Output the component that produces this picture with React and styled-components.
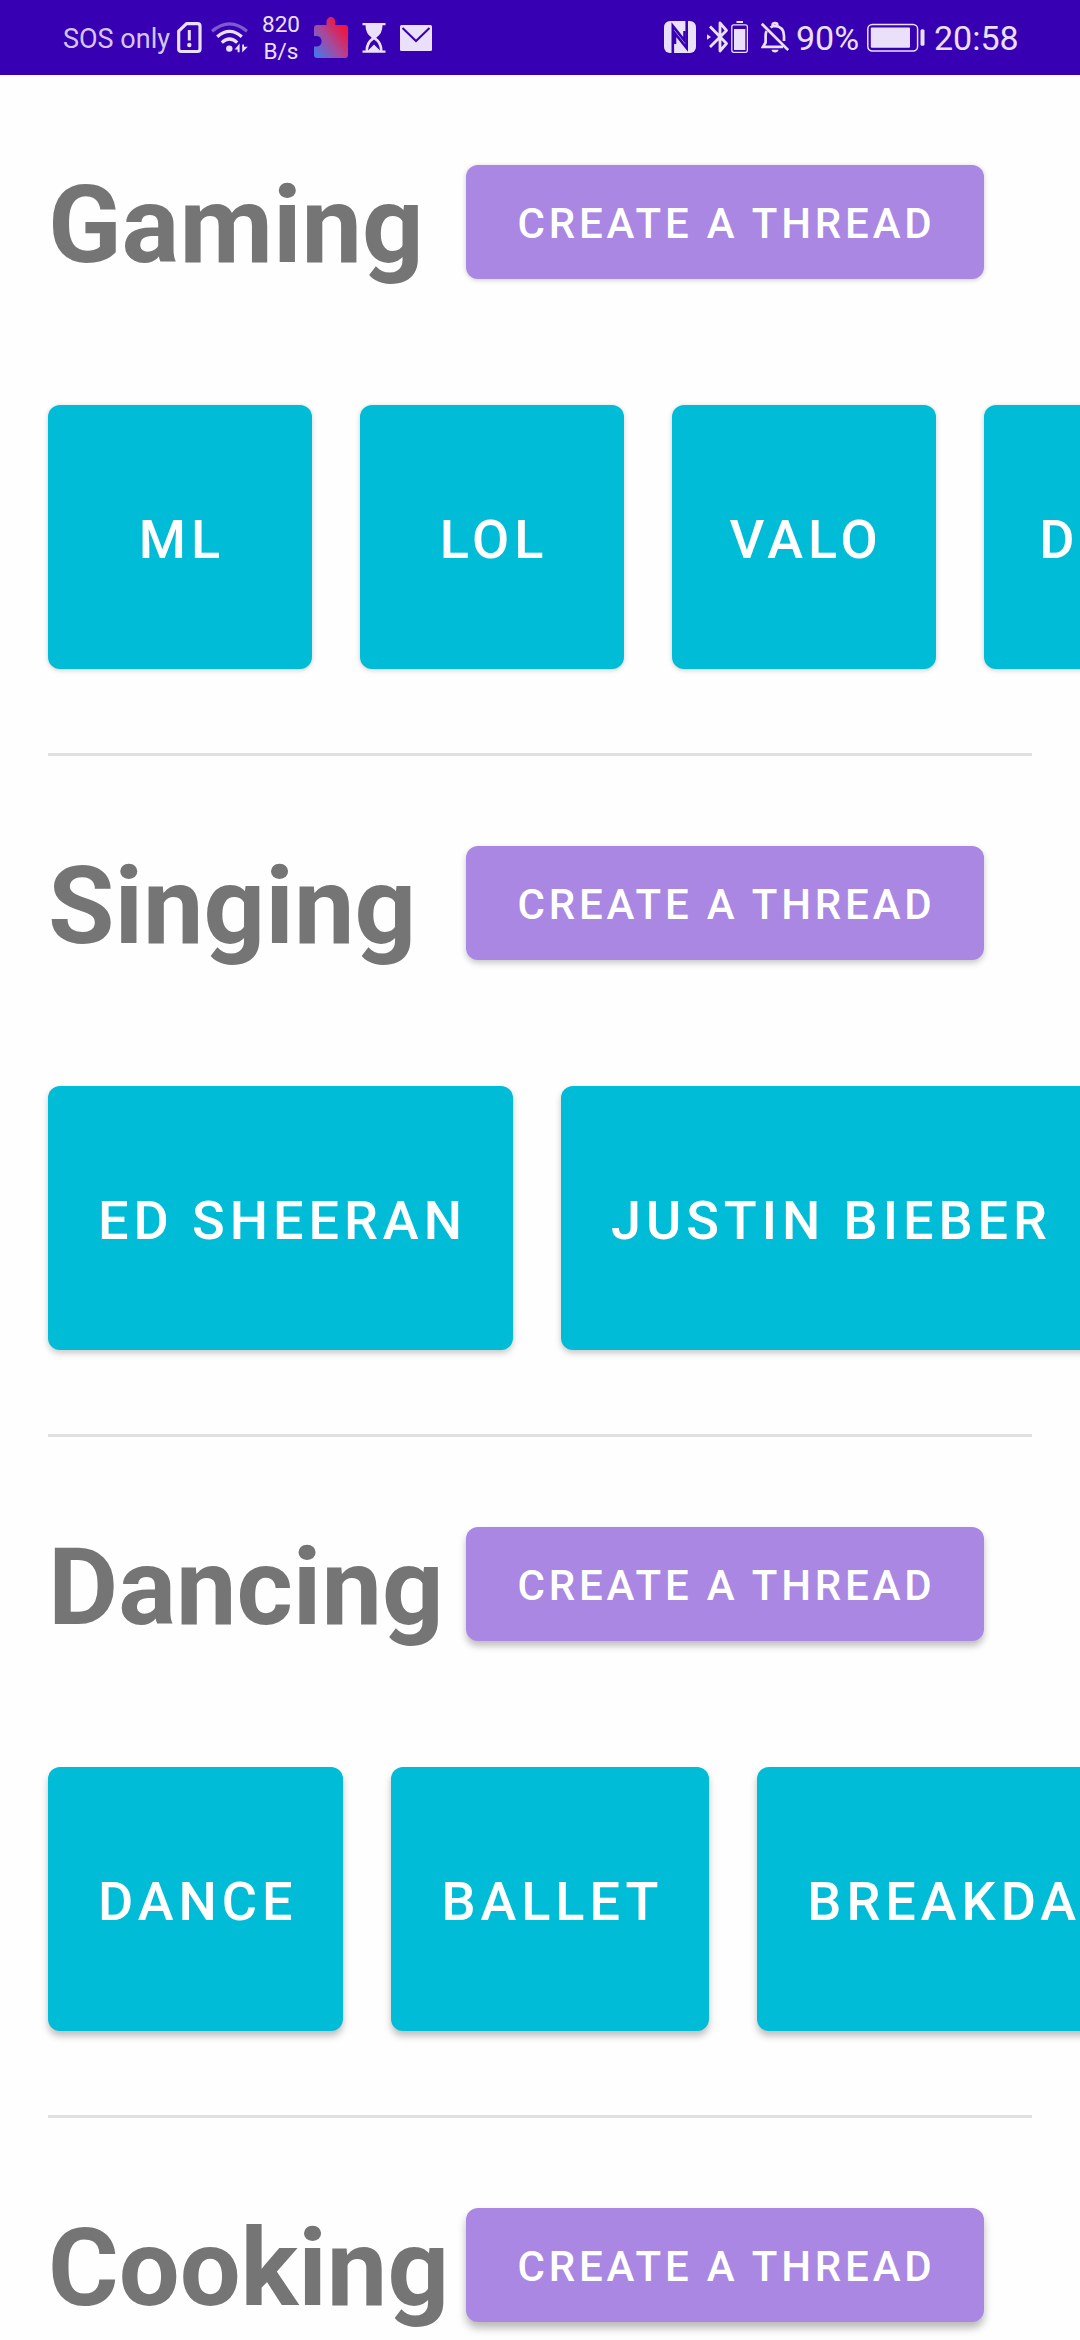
import { createGlobalStyle } from "styled-components";
import styled from "styled-components";

const GlobalStyle = createGlobalStyle`
  body {
    margin: 0;
    background: #fefefe;
    font-family: Roboto, "Liberation Sans", sans-serif;
  }
`;

const Screen = styled.div`
  width: 1080px;
  height: 2340px;
  overflow: hidden;
`;

const StatusBar = styled.header`
  display: flex;
  justify-content: space-between;
  height: 75px;
  padding: 0 61px 0 63px;
  box-sizing: border-box;
  background: #3700b3;
  color: #ebe0fa;
`;

const StatusGroup = styled.div`
  display: flex;
`;

const StatusText = styled.span`
  width: ${(props) => props.$width}px;
  padding-top: ${(props) => props.$top}px;
  margin-left: ${(props) => props.$gap || 0}px;
  font-size: ${(props) => props.$size}px;
  line-height: ${(props) => props.$line || 40}px;
  text-align: ${(props) => props.$align || "left"};
  color: ${(props) => props.$color || "inherit"};
  white-space: nowrap;
`;

const StatusIcon = styled.svg`
  flex: none;
  display: block;
  height: 75px;
  margin-left: ${(props) => props.$gap}px;
`;

const Section = styled.section`
  height: 681px;
  padding: 90px 0 0 48px;
  box-sizing: border-box;
`;

const SectionHeader = styled.div`
  display: flex;
  height: 114px;
`;

const Title = styled.h2`
  width: 418px;
  margin: 0;
  padding-top: 1px;
  box-sizing: border-box;
  font-size: 108px;
  font-weight: 700;
  line-height: 118px;
  color: #757575;
`;

const shadows = [
  "0 1px 5px rgba(0, 0, 0, 0.2)",
  "0 3px 6px rgba(0, 0, 0, 0.22)",
  "0 5px 7px rgba(0, 0, 0, 0.25)",
  "0 6px 8px rgba(0, 0, 0, 0.28)",
];

const Button = styled.button`
  flex: none;
  display: flex;
  align-items: center;
  justify-content: center;
  box-sizing: border-box;
  border: none;
  border-radius: 12px;
  color: #fff;
  font-family: inherit;
  font-weight: 500;
  white-space: nowrap;
  box-shadow: ${(props) => shadows[props.$depth]};
`;

const CreateButton = styled(Button)`
  width: 518px;
  height: 114px;
  padding: 2px 0 0 3px;
  background: #a987e3;
  font-size: 42px;
  letter-spacing: 3.83px;
`;

const TopicRow = styled.div`
  display: flex;
  gap: 48px;
  margin-top: 126px;
`;

const TopicButton = styled(Button)`
  min-width: 264px;
  height: 264px;
  padding: 5px 46px 0 50px;
  background: #00bcd7;
  font-size: 54px;
  letter-spacing: 4.96px;
`;

const Divider = styled.hr`
  width: 984px;
  height: 3px;
  margin: 84px 0 0;
  border: none;
  background: #e0e0e0;
`;

const sections = [
  { title: "Gaming", topics: ["ML", "LOL", "VALO", "DOTA"] },
  { title: "Singing", topics: ["ED SHEERAN", "JUSTIN BIEBER"] },
  { title: "Dancing", topics: ["DANCE", "BALLET", "BREAKDANCE"] },
  { title: "Cooking", topics: [] },
];

function SimAlertIcon() {
  return (
    <StatusIcon $gap={6} width="25" viewBox="0 0 25 75" fill="none">
      <path
        d="M9.5 23.7H20.5Q23 23.7 23 26.2V49Q23 51.5 20.5 51.5H4.2Q1.7 51.5 1.7 49V31.2Z"
        stroke="currentColor"
        strokeWidth="3.2"
        strokeLinejoin="round"
      />
      <path d="M12.3 30V40.5" stroke="currentColor" strokeWidth="3" />
      <circle cx="12.3" cy="45" r="2.2" fill="currentColor" />
    </StatusIcon>
  );
}

function WifiIcon() {
  return (
    <StatusIcon $gap={9} width="37" viewBox="0 0 37 75" fill="none">
      <g stroke="currentColor" strokeWidth="3.2">
        <path d="M1 31.2Q18.5 16.5 36 31.2" opacity="0.4" />
        <path d="M6.2 36.8Q18.5 26 30.8 36.8" />
        <path d="M10.8 42.6Q18.5 35.5 26.2 42.6" />
      </g>
      <circle cx="18.3" cy="48.6" r="3.2" fill="currentColor" />
      <path
        d="M28.6 43.5V52.2H26.6V49.5H23.6ZM31.2 52.4V44.5H33V46.8H36.8Z"
        fill="currentColor"
      />
    </StatusIcon>
  );
}

function PuzzleIcon() {
  return (
    <StatusIcon $gap={13} width="35" viewBox="0 0 35 75">
      <defs>
        <linearGradient id="puzzle" x1="0.08" y1="0.95" x2="0.85" y2="0.25">
          <stop offset="0" stopColor="#4b74e8" />
          <stop offset="0.5" stopColor="#a64a9c" />
          <stop offset="1" stopColor="#ee1744" />
        </linearGradient>
      </defs>
      <path
        d="M3 25H12.5V21.5A4.2 4.2 0 0 1 21.3 21.5V25H31Q34 25 34 28V55Q34 58 31 58H3Q0 58 0 55V46.500H3A5.300 5.300 0 0 0 3 36H0V28Q0 25 3 25Z"
        fill="url(#puzzle)"
      />
    </StatusIcon>
  );
}

function HourglassIcon() {
  return (
    <StatusIcon $gap={13} width="24" viewBox="0 0 24 75">
      <path
        d="M0.500 23H23.500V25.200H20.500Q20.500 33.500 14.200 37.700Q20.500 42 20.500 50.500H23.500V52.700H0.500V50.500H3.500Q3.500 42 9.800 37.700Q3.500 33.500 3.500 25.200H0.500Z"
        fill="currentColor"
      />
      <path d="M6 50.500Q6.500 43 12 39.500Q17.500 43 18 50.500L12 44.500Z" fill="#3700b3" />
    </StatusIcon>
  );
}

function MailIcon() {
  return (
    <StatusIcon $gap={14} width="32" viewBox="0 0 32 75">
      <rect y="25" width="32" height="26" rx="1.5" fill="currentColor" />
      <path d="M2.5 28L16 41L29.5 28" fill="none" stroke="#3700b3" strokeWidth="2" />
    </StatusIcon>
  );
}

function NfcIcon() {
  return (
    <StatusIcon $gap={0} width="32" viewBox="0 0 32 75">
      <rect y="21" width="32" height="32" rx="6" fill="currentColor" />
      <g fill="none" stroke="#3700b3" strokeWidth="2.6">
        <path d="M8.8 53V26L20.5 40.5V31" />
        <path d="M22.7 21V48L11 33.5V44" />
      </g>
    </StatusIcon>
  );
}

function BluetoothIcon() {
  return (
    <StatusIcon $gap={11} width="41" viewBox="0 0 41 75" fill="none">
      <path
        d="M3 26.5L19.5 43.5L13 51V23L19.5 30.5L3 47"
        stroke="currentColor"
        strokeWidth="2.8"
        strokeLinejoin="round"
      />
      <path d="M0 34.3L4 37L0 39.7Z" fill="currentColor" />
      <rect x="24.8" y="24.8" width="15.6" height="27.500" rx="2" stroke="currentColor" strokeWidth="1.300" />
      <rect x="27" y="29" width="11.3" height="21" fill="currentColor" />
      <rect x="29.500" y="21" width="6.500" height="2" fill="currentColor" />
    </StatusIcon>
  );
}

function BellOffIcon() {
  return (
    <StatusIcon $gap={13} width="28" viewBox="0 0 28 75" fill="none">
      <g stroke="currentColor" strokeWidth="2.7">
        <path d="M0.8 23.8L27.2 50" />
        <path d="M5.5 31Q4.6 33 4.6 36V42.500L2 46.800H22" />
        <path d="M9.500 27.500Q11.500 26 14 26Q23 26.500 23 36V41" />
        <path d="M11.700 26.500V24.700Q11.800 23.200 14 23.200Q16.300 23.200 16.300 25V27" />
      </g>
      <path d="M10.500 49.800H17.500Q17 52.500 14 52.500Q11 52.500 10.500 49.800Z" fill="currentColor" />
    </StatusIcon>
  );
}

function BatteryIcon() {
  return (
    <StatusIcon $gap={6} width="58" viewBox="0 0 58 75" fill="none">
      <rect x="0.8" y="24.5" width="49.8" height="26.5" rx="4.5" stroke="currentColor" strokeWidth="1.5" />
      <rect x="3.8" y="27.5" width="39.2" height="20.3" rx="1" fill="currentColor" />
      <rect x="53.5" y="29.3" width="4" height="16.5" rx="1.5" fill="currentColor" />
    </StatusIcon>
  );
}

function TopicSection({ title, topics, depth }) {
  return (
    <Section>
      <SectionHeader>
        <Title>{title}</Title>
        <CreateButton $depth={depth}>CREATE A THREAD</CreateButton>
      </SectionHeader>
      {topics.length !== 0 && (
        <>
          <TopicRow>
            {topics.map((topic) => (
              <TopicButton key={topic} $depth={depth}>
                {topic}
              </TopicButton>
            ))}
          </TopicRow>
          <Divider />
        </>
      )}
    </Section>
  );
}

function App() {
  return (
    <>
      <GlobalStyle />
      <Screen>
        <StatusBar>
          <StatusGroup>
            <StatusText $width={108} $top={19} $size={27} $color="#d6c5f4">
              SOS only
            </StatusText>
            <SimAlertIcon />
            <WifiIcon />
            <StatusText $width={40} $gap={13} $top={11} $size={22.5} $line={27} $align="center">
              820
              <br />
              B/s
            </StatusText>
            <PuzzleIcon />
            <HourglassIcon />
            <MailIcon />
          </StatusGroup>
          <StatusGroup>
            <NfcIcon />
            <BluetoothIcon />
            <BellOffIcon />
            <StatusText $width={65} $gap={7} $top={18} $size={34}>
              90%
            </StatusText>
            <BatteryIcon />
            <StatusText $width={85} $gap={9} $top={18} $size={34}>
              20:58
            </StatusText>
          </StatusGroup>
        </StatusBar>
        {sections.map((section, index) => (
          <TopicSection
            key={section.title}
            title={section.title}
            topics={section.topics}
            depth={index}
          />
        ))}
      </Screen>
    </>
  );
}

export default App;
